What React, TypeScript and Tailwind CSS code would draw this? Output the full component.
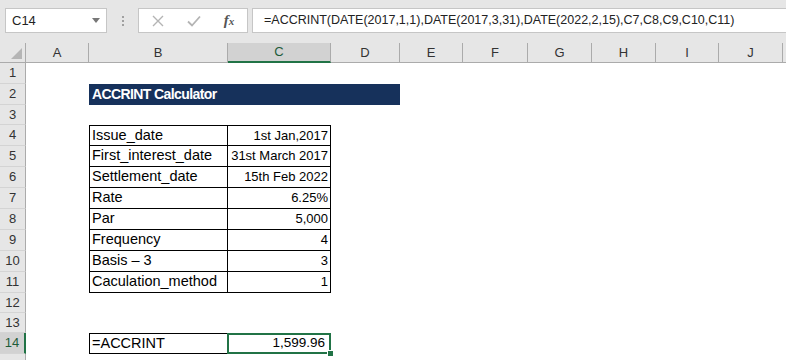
const cols = [
  { key: "A", w: 63 },
  { key: "B", w: 139 },
  { key: "C", w: 103 },
  { key: "D", w: 69 },
  { key: "E", w: 63 },
  { key: "F", w: 65 },
  { key: "G", w: 64 },
  { key: "H", w: 64 },
  { key: "I", w: 63 },
  { key: "J", w: 64 },
  { key: "", w: 40 },
];

const heights = [21, 21, 20, 21, 21, 21, 21, 21, 21, 21, 21, 20, 20, 21, 21];

const tableRows: [string, string][] = [
  ["Issue_date", "1st Jan,2017"],
  ["First_interest_date", "31st March 2017"],
  ["Settlement_date", "15th Feb 2022"],
  ["Rate", "6.25%"],
  ["Par", "5,000"],
  ["Frequency", "4"],
  ["Basis – 3", "3"],
  ["Caculation_method", "1"],
];

const font = { fontFamily: '"Liberation Sans", Arial, sans-serif' };

function FormulaBar() {
  return (
    <div className="flex h-[43px] items-start bg-[#e6e6e6] pt-[8px]">
      <div className="ml-[5px] flex h-[25px] w-[102px] items-center justify-between border border-[#c6c6c6] bg-white pl-[6px] pr-[6px] text-[13px] text-[#222]">
        <span>C14</span>
        <svg width="8" height="5" viewBox="0 0 8 5">
          <path d="M0 0h8L4 5z" fill="#777" />
        </svg>
      </div>
      <div className="flex h-[25px] w-[31px] flex-col items-center justify-center gap-[2px]">
        <span className="h-[2px] w-[2px] bg-[#a0a0a0]" />
        <span className="h-[2px] w-[2px] bg-[#a0a0a0]" />
        <span className="h-[2px] w-[2px] bg-[#a0a0a0]" />
      </div>
      <div className="flex h-[25px] w-[110px] items-center border border-[#c6c6c6] bg-white">
        <div className="flex w-[38px] justify-center">
          <svg width="12" height="12" viewBox="0 0 12 12">
            <path d="M1 1l10 10M11 1L1 11" stroke="#b4b4b4" strokeWidth="1.4" />
          </svg>
        </div>
        <div className="flex w-[34px] justify-center">
          <svg width="14" height="12" viewBox="0 0 14 12">
            <path d="M1 6.5l4 4L13 1.5" stroke="#b4b4b4" strokeWidth="1.8" fill="none" />
          </svg>
        </div>
        <div
          className="flex w-[36px] items-baseline justify-center italic text-[#555]"
          style={{ fontFamily: '"Liberation Serif", serif' }}
        >
          <span className="text-[15px] font-bold">f</span>
          <span className="text-[11px] font-bold">x</span>
        </div>
      </div>
      <div className="ml-[4px] flex h-[25px] flex-1 items-center whitespace-nowrap border border-r-0 border-[#c6c6c6] bg-white pl-[11px] text-[12.5px] text-[#222]">
        =ACCRINT(DATE(2017,1,1),DATE(2017,3,31),DATE(2022,2,15),C7,C8,C9,C10,C11)
      </div>
    </div>
  );
}

function ColumnHeader() {
  return (
    <div className="flex h-[20px] bg-[#e6e6e6]">
      <div className="relative w-[26px] shrink-0 border-r border-b border-[#ababab]">
        <svg className="absolute bottom-[3px] right-[3px]" width="11" height="11" viewBox="0 0 11 11">
          <path d="M11 0v11H0z" fill="#b5b5b5" />
        </svg>
      </div>
      {cols.map((c) => (
        <div
          key={c.key}
          style={{ width: c.w }}
          className={
            c.key === "C"
              ? "flex shrink-0 items-center justify-center border-r border-b-2 border-r-[#ababab] border-b-[#217346] bg-[#d2d2d2] text-[13px] text-[#1e5c3a]"
              : "flex shrink-0 items-center justify-center border-r border-b border-[#ababab] text-[13px] text-[#333]"
          }
        >
          {c.key}
        </div>
      ))}
    </div>
  );
}

function RowHead({ n, h }: { n: number; h: number }) {
  const sel = n === 14;
  return (
    <div
      style={{ height: h }}
      className={
        sel
          ? "flex w-[26px] shrink-0 items-center justify-center border-b border-r-2 border-b-[#d4d4d4] border-r-[#217346] bg-[#d2d2d2] text-[13px] text-[#1e5c3a]"
          : "flex w-[26px] shrink-0 items-center justify-center border-b border-r border-b-[#d4d4d4] border-r-[#ababab] bg-[#e6e6e6] text-[13px] text-[#333]"
      }
    >
      {n < 15 ? n : null}
    </div>
  );
}

function Row({ n }: { n: number }) {
  const h = heights[n - 1];
  let body: React.ReactNode = <div className="flex-1" />;

  if (n === 2) {
    body = (
      <>
        <div className="w-[63px] shrink-0" />
        <div className="flex w-[311px] shrink-0 items-center bg-[#16315b] pl-[3px] text-[14px] font-bold tracking-[-0.6px] text-white">
          ACCRINT Calculator
        </div>
      </>
    );
  } else if (n >= 4 && n <= 11) {
    const [label, val] = tableRows[n - 4];
    const top = n === 4 ? " border-t" : "";
    body = (
      <>
        <div className="w-[63px] shrink-0" />
        <div className={"flex w-[139px] shrink-0 items-center whitespace-nowrap border-x border-b border-black pl-[2px] text-[14.5px] text-black" + top}>
          {label}
        </div>
        <div className={"flex w-[103px] shrink-0 items-center justify-end whitespace-nowrap border-r border-b border-black pr-[2px] text-[13px] text-black" + top}>
          {val}
        </div>
      </>
    );
  } else if (n === 14) {
    body = (
      <>
        <div className="w-[63px] shrink-0" />
        <div className="flex w-[139px] shrink-0 items-center border border-r-0 border-black pl-[2px] text-[14.5px] text-black">
          =ACCRINT
        </div>
        <div className="relative ml-[-1px] flex w-[104px] shrink-0 items-center justify-end border-2 border-[#217346] pr-[4px] text-[13.5px] text-black">
          1,599.96
          <span className="absolute bottom-[-5px] right-[-5px] h-[7px] w-[7px] border border-white bg-[#217346]" />
        </div>
      </>
    );
  }

  return (
    <div className="flex" style={{ height: h }}>
      <RowHead n={n} h={h} />
      {body}
    </div>
  );
}

export default function App() {
  return (
    <div className="h-[360px] w-[786px] overflow-hidden bg-white" style={font}>
      <FormulaBar />
      <ColumnHeader />
      {Array.from({ length: 15 }, (_, i) => (
        <Row key={i} n={i + 1} />
      ))}
    </div>
  );
}
